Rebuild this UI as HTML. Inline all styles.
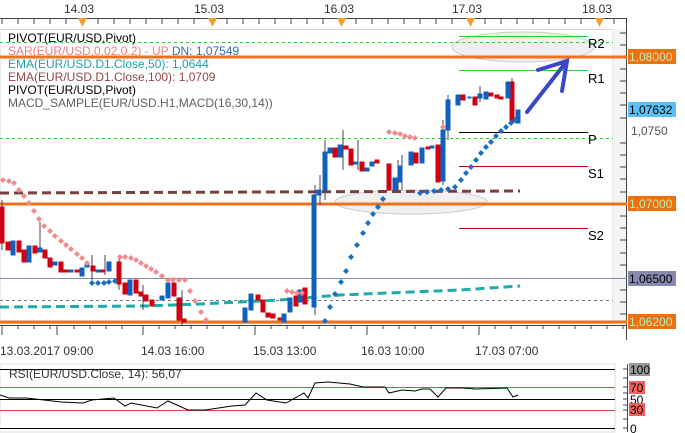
<!DOCTYPE html>
<html><head><meta charset="utf-8"><style>
html,body{margin:0;padding:0;background:#fff;width:685px;height:433px;overflow:hidden}
svg{display:block}
text{font-family:"Liberation Sans",Tahoma,sans-serif;font-size:12px}
</style></head><body>
<svg width="685" height="433" viewBox="0 0 685 433" xmlns="http://www.w3.org/2000/svg">
<rect width="685" height="433" fill="#fff"/>
<g fill="#333"><text x="64" y="13">14.03</text><text x="194" y="13">15.03</text><text x="324" y="13">16.03</text><text x="452" y="13">17.03</text><text x="582" y="13">18.03</text></g>
<line x1="0" y1="18.5" x2="627" y2="18.5" stroke="#444"/>
<g stroke="#444">
<path d="M2 18v6M18 18v6M34 18v6M50 18v6M66 18v6M98 18v6M114 18v6M130 18v6M146 18v6M162 18v6M178 18v6M194 18v6M227 18v6M243 18v6M259 18v6M275 18v6M291 18v6M307 18v6M323 18v6M356 18v6M372 18v6M388 18v6M404 18v6M420 18v6M436 18v6M452 18v6M485 18v6M501 18v6M517 18v6M533 18v6M549 18v6M565 18v6M581 18v6M614 18v6"/>
</g>
<g fill="#f0a030"><path d="M78 18h9l-4.5 9z"/><path d="M208 18h9l-4.5 9z"/><path d="M337 18h9l-4.5 9z"/><path d="M466 18h9l-4.5 9z"/><path d="M595 18h9l-4.5 9z"/></g>
<rect x="0" y="29.5" width="613" height="294" fill="#fff" stroke="#d8d8d8"/>
<rect x="613" y="29" width="13" height="296" fill="#f4f4f4"/>
<line x1="626.5" y1="18" x2="626.5" y2="340" stroke="#444"/>
<g stroke="#444"><path d="M620 33h7M620 45h7M620 69h7M620 81h7M620 93h7M620 105h7M620 118h7M620 143h7M620 155h7M620 167h7M620 179h7M620 192h7M620 216h7M620 228h7M620 240h7M620 253h7M620 265h7M620 290h7M620 302h7M620 314h7"/></g>
<ellipse cx="523" cy="47" rx="71" ry="15" fill="#f0f0f0" stroke="#ccc"/>
<ellipse cx="411" cy="202" rx="76" ry="12" fill="#f0f0f0" stroke="#ccc"/>
<line x1="0" y1="42.5" x2="613" y2="42.5" stroke="#3c3" stroke-dasharray="3,3"/>
<line x1="0" y1="138.5" x2="613" y2="138.5" stroke="#3c3" stroke-dasharray="3,3"/>
<line x1="0" y1="278.5" x2="627" y2="278.5" stroke="#8888aa"/>
<line x1="0" y1="300.5" x2="613" y2="300.5" stroke="#777" stroke-dasharray="3,3"/>
<line x1="0" y1="57" x2="627" y2="57" stroke="#f07020" stroke-width="3"/>
<line x1="0" y1="204" x2="627" y2="204" stroke="#f07020" stroke-width="3"/>
<line x1="0" y1="322" x2="627" y2="322" stroke="#f07020" stroke-width="3"/>
<line x1="459" y1="36.5" x2="588" y2="36.5" stroke="#3c3"/>
<line x1="459" y1="70.5" x2="588" y2="70.5" stroke="#3c3"/>
<line x1="459" y1="132.5" x2="588" y2="132.5" stroke="#000"/>
<line x1="459" y1="166.5" x2="588" y2="166.5" stroke="#c00"/>
<line x1="459" y1="228.5" x2="588" y2="228.5" stroke="#c00"/>
<g fill="#000"><text x="588" y="48" style="font-size:13px">R2</text><text x="588" y="83" style="font-size:13px">R1</text><text x="588" y="144" style="font-size:13px">P</text><text x="588" y="178" style="font-size:13px">S1</text><text x="588" y="240" style="font-size:13px">S2</text></g>
<polyline points="0,193 520,191" fill="none" stroke="#7a4040" stroke-width="3" stroke-dasharray="9,5"/>
<polyline points="0,307 145,306 200,304 280,300 340,295 460,290 520,286" fill="none" stroke="#20aaaa" stroke-width="3" stroke-dasharray="9,5"/>
<g stroke="#444"><path d="M2 200v50M40 222v30M92 255v25M105 255v20M119 255v35M143 285v25M182 290v35M315 185v130M320 175v30M325 140v60M343 130v40M358 140v30M398 160v30M402 155v35M443 120v65M448 95v45M480 86v16M512 78v46"/></g>
<g fill="#d00010" stroke="#d00010">
<rect x="0" y="207" width="4" height="36"/><rect x="6" y="242" width="4" height="8"/><rect x="17" y="241" width="4" height="11"/><rect x="22" y="250" width="4" height="12"/><rect x="33" y="246" width="4" height="7"/><rect x="43" y="250" width="4" height="8"/><rect x="48" y="258" width="4" height="9"/><rect x="59" y="262" width="4" height="10"/><rect x="64" y="270" width="4" height="2"/><rect x="75" y="270" width="4" height="2"/><rect x="91" y="266" width="4" height="5"/><rect x="101" y="270" width="4" height="2"/><rect x="117" y="262" width="4" height="22"/><rect x="123" y="283" width="4" height="11"/><rect x="134" y="280" width="4" height="13"/><rect x="139" y="292" width="4" height="4"/><rect x="144" y="295" width="4" height="6"/><rect x="150" y="300" width="4" height="6"/><rect x="172" y="283" width="4" height="13"/><rect x="177" y="298" width="4" height="22"/><rect x="182" y="319" width="4" height="3"/>
<rect x="256" y="295" width="4" height="5"/><rect x="261" y="300" width="4" height="12"/><rect x="266" y="313" width="4" height="4"/><rect x="271" y="314" width="4" height="4"/><rect x="278" y="318" width="4" height="2"/><rect x="294" y="296" width="4" height="10"/><rect x="303" y="288" width="4" height="16"/>
<rect x="333" y="148" width="4" height="9"/><rect x="344" y="146" width="4" height="3"/><rect x="349" y="149" width="4" height="16"/><rect x="360" y="162" width="4" height="9"/><rect x="375" y="160" width="4" height="3"/><rect x="387" y="164" width="4" height="26"/><rect x="414" y="153" width="4" height="10"/><rect x="426" y="147" width="4" height="2"/><rect x="436" y="145" width="4" height="37"/>
<rect x="461" y="95" width="4" height="5"/><rect x="473" y="97" width="4" height="8"/><rect x="489" y="93" width="4" height="3"/><rect x="495" y="95" width="4" height="3"/><rect x="499" y="97" width="4" height="2"/><rect x="510" y="82" width="4" height="40"/>
</g>
<g fill="#1060c0" stroke="#1060c0">
<rect x="11" y="241" width="4" height="14"/><rect x="27" y="246" width="4" height="16"/><rect x="38" y="248" width="4" height="4"/><rect x="53" y="262" width="4" height="3"/><rect x="69" y="270" width="4" height="2"/><rect x="80" y="268" width="4" height="8"/><rect x="85" y="265" width="4" height="2"/><rect x="96" y="270" width="4" height="2"/><rect x="107" y="262" width="4" height="9"/><rect x="128" y="280" width="4" height="15"/><rect x="160" y="296" width="4" height="4"/><rect x="166" y="283" width="4" height="15"/>
<rect x="243" y="308" width="4" height="14"/><rect x="249" y="294" width="4" height="16"/><rect x="282" y="314" width="4" height="8"/><rect x="288" y="298" width="4" height="14"/><rect x="298" y="290" width="4" height="12"/>
<rect x="312" y="195" width="4" height="112"/><rect x="317" y="190" width="4" height="5"/><rect x="323" y="152" width="4" height="38"/><rect x="328" y="148" width="4" height="5"/><rect x="338" y="145" width="4" height="12"/><rect x="354" y="162" width="4" height="2"/><rect x="365" y="168" width="4" height="3"/><rect x="370" y="162" width="4" height="4"/><rect x="393" y="178" width="4" height="12"/><rect x="398" y="166" width="4" height="16"/><rect x="409" y="152" width="4" height="13"/><rect x="420" y="148" width="4" height="15"/><rect x="430" y="146" width="4" height="2"/><rect x="441" y="130" width="4" height="51"/><rect x="446" y="100" width="4" height="30"/>
<rect x="456" y="95" width="4" height="10"/><rect x="468" y="97" width="3" height="1"/><rect x="478" y="94" width="4" height="4"/><rect x="484" y="92" width="4" height="7"/><rect x="506" y="82" width="4" height="16"/><rect x="516" y="110" width="4" height="13"/>
</g>
<g fill="#f08c8c">
<path d="M3 177l3 3-3 3-3-3zM9 178l3 3-3 3-3-3zM14 180l3 3-3 3-3-3zM19 187l3 3-3 3-3-3zM24 193l3 3-3 3-3-3zM29 200l3 3-3 3-3-3zM34 208l3 3-3 3-3-3zM39 216l3 3-3 3-3-3zM44 223l3 3-3 3-3-3zM50 228l3 3-3 3-3-3zM55 233l3 3-3 3-3-3zM61 238l3 3-3 3-3-3zM66 242l3 3-3 3-3-3zM71 246l3 3-3 3-3-3zM77 251l3 3-3 3-3-3zM82 255l3 3-3 3-3-3zM87 260l3 3-3 3-3-3z"/>
<path d="M120 254l3 3-3 3-3-3zM125 254l3 3-3 3-3-3zM131 255l3 3-3 3-3-3zM136 257l3 3-3 3-3-3zM141 260l3 3-3 3-3-3zM146 263l3 3-3 3-3-3zM151 266l3 3-3 3-3-3zM156 269l3 3-3 3-3-3zM162 273l3 3-3 3-3-3zM168 277l3 3-3 3-3-3zM173 277l3 3-3 3-3-3zM179 277l3 3-3 3-3-3zM185 277l3 3-3 3-3-3zM190 288l3 3-3 3-3-3zM195 298l3 3-3 3-3-3zM201 309l3 3-3 3-3-3zM206 317l3 3-3 3-3-3z"/>
<path d="M287 288l3 3-3 3-3-3zM292 289l3 3-3 3-3-3zM297 290l3 3-3 3-3-3zM302 290l3 3-3 3-3-3z"/>
<path d="M389 129l3 3-3 3-3-3zM395 130l3 3-3 3-3-3zM400 131l3 3-3 3-3-3zM405 133l3 3-3 3-3-3zM410 134l3 3-3 3-3-3zM415 135l3 3-3 3-3-3zM443 124l3 3-3 3-3-3z"/>
</g>
<g fill="#1a70c0">
<path d="M92 280l3 3-3 3-3-3zM98 280l3 3-3 3-3-3zM104 280l3 3-3 3-3-3zM109 279l3 3-3 3-3-3zM115 278l3 3-3 3-3-3z"/>
<path d="M325 318l3 3-3 3-3-3zM330 304l3 3-3 3-3-3zM335 291l3 3-3 3-3-3zM341 279l3 3-3 3-3-3zM346 268l3 3-3 3-3-3zM351 254l3 3-3 3-3-3zM357 242l3 3-3 3-3-3zM363 230l3 3-3 3-3-3zM368 220l3 3-3 3-3-3zM373 211l3 3-3 3-3-3zM378 204l3 3-3 3-3-3zM383 196l3 3-3 3-3-3z"/>
<path d="M420 190l3 3-3 3-3-3zM427 189l3 3-3 3-3-3zM434 188l3 3-3 3-3-3zM441 187l3 3-3 3-3-3zM448 186l3 3-3 3-3-3zM455 184l3 3-3 3-3-3zM461 177l3 3-3 3-3-3zM466 170l3 3-3 3-3-3zM471 164l3 3-3 3-3-3zM476 157l3 3-3 3-3-3zM481 150l3 3-3 3-3-3zM486 144l3 3-3 3-3-3zM491 139l3 3-3 3-3-3zM496 133l3 3-3 3-3-3zM501 128l3 3-3 3-3-3zM506 124l3 3-3 3-3-3zM511 120l3 3-3 3-3-3zM515 117l3 3-3 3-3-3z"/>
</g>
<g stroke="#3a48c8" stroke-width="4" fill="none" stroke-linecap="round"><path d="M527 112L567 61M538 70L567 61L562 91"/></g>
<g>
<text x="8" y="42" fill="#000">PIVOT(EUR/USD,Pivot)</text>
<text x="8" y="55" fill="#f08080">SAR(EUR/USD,0.02,0.2) -  UP <tspan fill="#3070c0">DN: 1,07549</tspan></text>
<text x="8" y="68" fill="#20a0a8">EMA(EUR/USD.D1.Close,50): 1,0644</text>
<text x="8" y="81" fill="#904848">EMA(EUR/USD.D1.Close,100): 1,0709</text>
<text x="8" y="94" fill="#000">PIVOT(EUR/USD,Pivot)</text>
<text x="8" y="107" fill="#606060">MACD_SAMPLE(EUR/USD.H1,MACD(16,30,14))</text>
</g>
<rect x="628" y="49" width="48" height="15" fill="#f07010"/><text x="629" y="61" fill="#b8f0b0">1,08000</text>
<rect x="628" y="102" width="48" height="15" fill="#5cc0f8"/><text x="629" y="114" fill="#000">1,07632</text>
<text x="631" y="135" fill="#555">1,0750</text>
<rect x="628" y="196" width="48" height="15" fill="#f07010"/><text x="629" y="208" fill="#b8f0b0">1,07000</text>
<rect x="628" y="271" width="48" height="15" fill="#8888b0"/><text x="629" y="283" fill="#000">1,06500</text>
<rect x="628" y="314" width="48" height="15" fill="#f07010"/><text x="629" y="326" fill="#b8f0b0">1,06200</text>
<line x1="0" y1="325.5" x2="627" y2="325.5" stroke="#444"/>
<g stroke="#444"><path d="M2 325v10M18 325v4M34 325v4M50 325v4M57 325v10M74 325v4M90 325v4M106 325v4M122 325v4M143 325v10M159 325v4M175 325v4M191 325v4M207 325v4M223 325v4M239 325v4M255 325v10M271 325v4M287 325v4M303 325v4M319 325v4M335 325v4M351 325v4M367 325v10M383 325v4M399 325v4M415 325v4M431 325v4M447 325v4M463 325v4M479 325v10M495 325v4M511 325v4M527 325v4M543 325v4M559 325v4M575 325v4M591 325v4M607 325v4M623 325v4"/></g>
<g fill="#333"><text x="0" y="355">13.03.2017 09:00</text><text x="141" y="355">14.03 16:00</text><text x="253" y="355">15.03 13:00</text><text x="361" y="355">16.03 10:00</text><text x="475" y="355">17.03 07:00</text></g>
<rect x="0" y="364" width="615" height="68" fill="#fff" stroke="#ddd"/>
<line x1="0" y1="369.5" x2="615" y2="369.5" stroke="#000"/>
<line x1="0" y1="387.5" x2="615" y2="387.5" stroke="#d05050"/>
<line x1="0" y1="399.5" x2="615" y2="399.5" stroke="#000"/>
<line x1="0" y1="410.5" x2="615" y2="410.5" stroke="#d05050"/>
<line x1="0" y1="428.5" x2="615" y2="428.5" stroke="#000"/>
<text x="9" y="378" fill="#333">RSI(EUR/USD.Close, 14): 56,07</text>
<polyline fill="none" stroke="#000" points="0,395 9,398 26,398 44,400 61,402 83,403 92,400 114,398 125,406 131,403 157,408 168,401 188,410 205,410 232,406 245,405 256,393 267,400 286,403 304,393 308,398 315,383 328,382 350,384 363,387 385,387 389,393 402,390 415,391 422,389 430,389 438,397 446,388 463,388 476,389 507,388 513,397 518,395"/>
<line x1="627.5" y1="364" x2="627.5" y2="432" stroke="#444"/>
<g stroke="#444"><path d="M623 369h5M623 378h5M623 387h5M623 393h5M623 399h5M623 405h5M623 410h5M623 419h5M623 428h5"/></g>
<rect x="629" y="363" width="21" height="13" fill="#999"/><text x="630" y="374" fill="#000">100</text>
<rect x="629" y="381" width="16" height="13" fill="#f06060"/><text x="630" y="392" fill="#000">70</text>
<text x="630" y="404" fill="#000">50</text>
<rect x="629" y="403" width="16" height="13" fill="#f06060"/><text x="630" y="414" fill="#000">30</text>
<text x="630" y="433" fill="#000">0</text>
</svg>
</body></html>
